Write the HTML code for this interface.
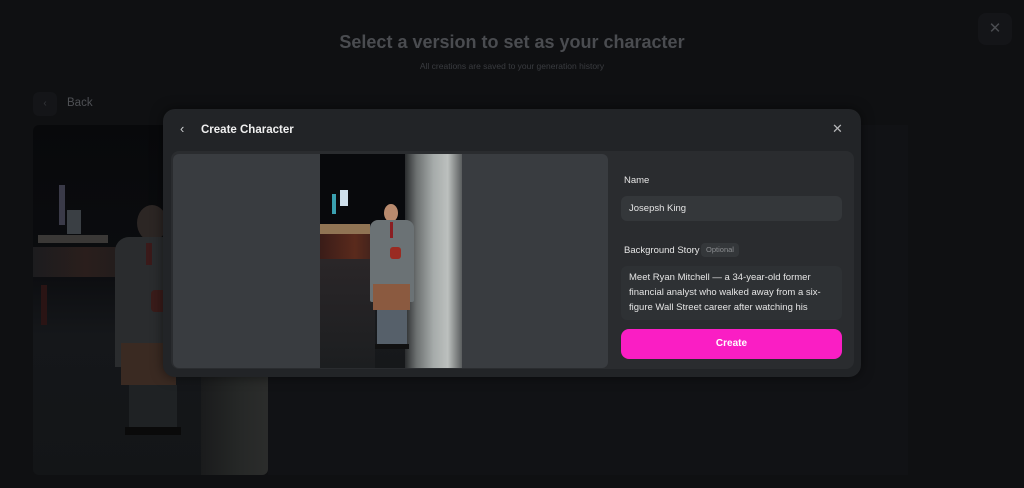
<!DOCTYPE html>
<html><head><meta charset="utf-8"><style>
*{margin:0;padding:0;box-sizing:border-box}
body{width:1024px;height:488px;background:#0f1012;font-family:"Liberation Sans",sans-serif;position:relative;overflow:hidden}
.abs{position:absolute}
</style></head><body>
<div class="abs" style="left:0;top:32px;width:1024px;text-align:center;font-size:18px;font-weight:bold;color:#4a4c50">Select a version to set as your character</div>
<div class="abs" style="left:0;top:61px;width:1024px;text-align:center;font-size:8.5px;color:#3a3c40">All creations are saved to your generation history</div>
<div class="abs" style="left:978px;top:13px;width:34px;height:32px;border-radius:8px;background:#141518;color:#4a4c50;font-size:15px;text-align:center;line-height:32px">✕</div>
<div class="abs" style="left:33px;top:92px;width:24px;height:24px;border-radius:6px;background:#141518;color:#36383c;font-size:10px;text-align:center;line-height:24px">‹</div>
<div class="abs" style="left:67px;top:97px;font-size:11.5px;color:#4e5054">Back</div>
<div class="abs" style="left:268px;top:125px;width:640px;height:350px;background:#111215"></div>
<div class="abs" style="left:33px;top:125px;width:235px;height:350px;border-radius:6px;overflow:hidden;background:linear-gradient(180deg,#08090b 0%,#0b0c0f 40%,#15171a 60%,#131517 100%)">
  <div class="abs" style="left:26px;top:60px;width:6px;height:40px;background:#3a3a48"></div>
  <div class="abs" style="left:34px;top:85px;width:14px;height:24px;background:#3a3f44"></div>
  <div class="abs" style="left:5px;top:110px;width:70px;height:8px;background:#3a3836"></div>
  <div class="abs" style="left:0;top:122px;width:105px;height:30px;background:linear-gradient(90deg,#1c1c1e,#2a1e1c,#1e1c1c)"></div>
  <div class="abs" style="left:8px;top:160px;width:6px;height:40px;background:#2a1414"></div>
  <div class="abs" style="left:104px;top:80px;width:30px;height:36px;border-radius:50%;background:#2c2624"></div>
  <div class="abs" style="left:82px;top:112px;width:80px;height:130px;border-radius:14px 14px 0 0;background:#2a2c2e"></div>
  <div class="abs" style="left:113px;top:118px;width:6px;height:22px;background:#3a1a1a"></div>
  <div class="abs" style="left:118px;top:165px;width:16px;height:22px;border-radius:4px;background:#3a1c1a"></div>
  <div class="abs" style="left:88px;top:218px;width:55px;height:42px;background:#3a2a22"></div>
  <div class="abs" style="left:96px;top:260px;width:48px;height:50px;background:#1f2224"></div>
  <div class="abs" style="left:92px;top:302px;width:56px;height:8px;background:#0a0a0a"></div>
  <div class="abs" style="left:168px;top:135px;width:100px;height:220px;background:linear-gradient(90deg,#1a1b1c,#262827 40%,#2c2d2c 70%,#1c1d1d)"></div>
</div>

<div class="abs" style="left:163px;top:109px;width:698px;height:268px;border-radius:12px;background:#222427;box-shadow:0 0 12px rgba(0,0,0,.5)">
  <div class="abs" style="left:17px;top:12px;font-size:13px;color:#cfd0d2">‹</div>
  <div class="abs" style="left:38px;top:15px;font-size:11.5px;font-weight:bold;color:#f0f0f0">Create Character</div>
  <div class="abs" style="left:669px;top:12px;font-size:13px;color:#b5b6b8">✕</div>
  <div class="abs" style="left:8px;top:42px;width:683px;height:218px;border-radius:8px;background:#2a2c2f"></div>
</div>
<div class="abs" style="left:173px;top:154px;width:435px;height:214px;border-radius:6px;background:#393c40;overflow:hidden">
  <div class="abs" style="left:147px;top:0;width:142px;height:214px;background:linear-gradient(180deg,#07080b 0%,#0c0e12 35%,#1a1c20 55%,#16181a 100%)">
    <div class="abs" style="left:0;top:0;width:95px;height:70px;background:#08090c"></div>
    <div class="abs" style="left:20px;top:36px;width:8px;height:16px;background:#cfe0ec"></div>
    <div class="abs" style="left:12px;top:40px;width:4px;height:20px;background:#3aa0b0"></div>
    <div class="abs" style="left:0;top:70px;width:50px;height:10px;background:#c9a070;opacity:.7"></div>
    <div class="abs" style="left:0;top:80px;width:70px;height:25px;background:linear-gradient(90deg,#3a1c18,#5a2a1c,#2a1c1c)"></div>
    <div class="abs" style="left:0;top:105px;width:55px;height:109px;background:linear-gradient(180deg,#2a2628,#1c1e20)"></div>
    <div class="abs" style="left:85px;top:0;width:57px;height:214px;background:linear-gradient(90deg,#2a2c2e,#6c7070 20%,#a6abaa 50%,#bcc0be 75%,#5a5d5e)"></div>
    <div class="abs" style="left:64px;top:50px;width:14px;height:18px;border-radius:50%;background:#b88a6e"></div>
    <div class="abs" style="left:50px;top:66px;width:44px;height:82px;border-radius:8px 8px 2px 2px;background:#6b7275"></div>
    <div class="abs" style="left:70px;top:68px;width:3px;height:16px;background:#8a1e22"></div>
    <div class="abs" style="left:70px;top:93px;width:11px;height:12px;border-radius:3px;background:#9a2b22"></div>
    <div class="abs" style="left:53px;top:130px;width:37px;height:26px;background:#8b5a40"></div>
    <div class="abs" style="left:57px;top:156px;width:30px;height:36px;background:#56606a"></div>
    <div class="abs" style="left:55px;top:190px;width:34px;height:5px;background:#111"></div>
  </div>
</div>

<div class="abs" style="left:624px;top:175px;font-size:9.5px;color:#e6e6e6">Name</div>
<div class="abs" style="left:621px;top:196px;width:221px;height:25px;border-radius:6px;background:#34373a;font-size:9.5px;color:#e4e4e4;padding:7px 0 0 8px">Josepsh King</div>
<div class="abs" style="left:624px;top:245px;font-size:9.5px;color:#e6e6e6">Background Story</div>
<div class="abs" style="left:701px;top:243px;width:38px;height:14px;border-radius:4px;background:#34373a;font-size:7.5px;color:#8b8d90;text-align:center;line-height:14px">Optional</div>
<div class="abs" style="left:621px;top:266px;width:221px;height:54px;border-radius:6px;background:#2e3134;font-size:9.5px;line-height:15px;color:#e4e4e4;padding:4px 8px;overflow:hidden">Meet Ryan Mitchell — a 34-year-old former financial analyst who walked away from a six-figure Wall Street career after watching his</div>
<div class="abs" style="left:621px;top:329px;width:221px;height:30px;border-radius:8px;background:#fa1ec4;color:#fff;font-size:10px;font-weight:bold;text-align:center;line-height:30px">Create</div>
</body></html>
